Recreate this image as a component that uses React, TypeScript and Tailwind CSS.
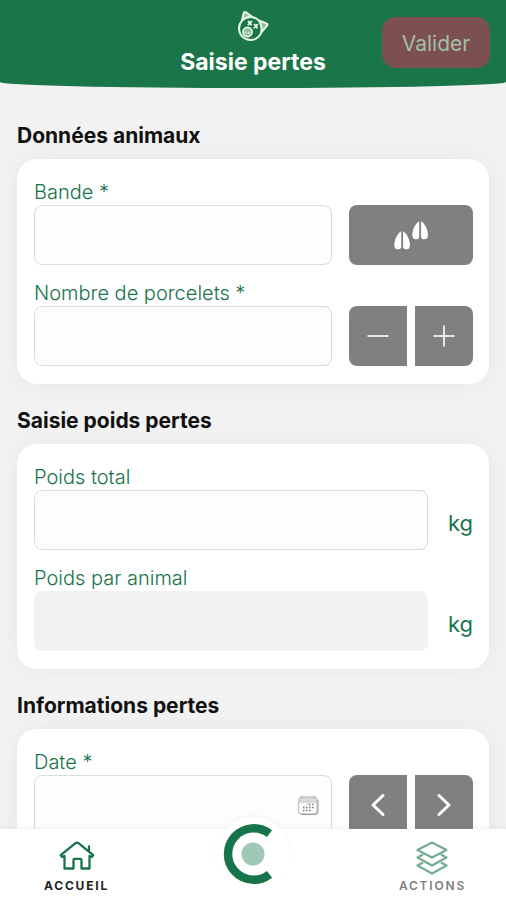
import { useState, type ReactNode } from "react";

const actionClass =
  "flex h-[60px] flex-1 items-center justify-center bg-[#808080] text-white";

function PigIcon() {
  return (
    <svg width="32" height="32" viewBox="0 0 32 32" fill="none" stroke="#eaf6e6" strokeLinecap="round" strokeLinejoin="round" aria-hidden="true">
      <circle cx="13.500" cy="18.500" r="11.500" strokeWidth="2" />
      <path d="M4.800 10.500 6.800 3Q7.400 1.200 9 2.200L14.800 6.600Q9 6.500 4.800 10.500ZM22.200 10.500 29.300 13.300Q31.200 14.200 30 15.700L24.600 22.200Q25.200 15.500 22.200 10.500Z" strokeWidth="1.900" fill="#8fbd9f" />
      <path d="m11.600 11.600 2.400 3M14.400 11.600l-3 3M17.500 14.700l2.400 3M20.300 14.700l-3 3" strokeWidth="1.900" />
      <circle cx="10.500" cy="22" r="4.600" strokeWidth="1.700" fill="#8fbd9f" />
      <path d="M8.900 22v.6M11.900 22.600v.6" strokeWidth="1.500" />
    </svg>
  );
}

function HoofIcon() {
  return (
    <svg width="34" height="29" viewBox="0 0 34 29" fill="white" aria-hidden="true">
      <path d="M7.200 10.300C3.400 12 .3 19.500 .3 24c0 2.800 1.200 4.200 3.300 4.200s3.600-.8 3.600-2.300zM9.100 10.300c3.800 1.700 6.900 9.200 6.900 13.700 0 2.800-1.200 4.200-3.300 4.200s-3.600-.8-3.600-2.300z" />
      <path d="M25.200.3C21.400 2 18.300 9.500 18.300 14c0 2.800 1.200 4.200 3.300 4.200s3.600-.8 3.600-2.300zM27.100.3c3.800 1.700 6.900 9.200 6.900 13.700 0 2.800-1.200 4.200-3.300 4.200s-3.600-.8-3.600-2.300z" />
    </svg>
  );
}

function CalendarIcon() {
  return (
    <svg width="21" height="21" viewBox="0 0 21 21" fill="none" aria-hidden="true">
      <path d="M1 8V4.500Q1 2 3.500 2h13Q19 2 19 4.500V8h-8v2H9V8Z" fill="#d9d9d9" />
      <path d="M1 4.500Q1 2 3.500 2h13Q19 2 19 4.500V16q0 3-3 3H3.500Q.5 19 .5 16.500ZM4 .5V3M16 .5V3" stroke="#b3b3b3" />
      <path d="M3 19.500h14q3 0 3-3V5" stroke="#999" />
      <path d="M11 9.500h6M5 12.500h12M5 15.500h9" stroke="#777" strokeWidth="1.500" strokeDasharray="1.500 1.500" />
    </svg>
  );
}

function HomeIcon() {
  return (
    <svg width="36" height="30" viewBox="0 0 36 30" fill="none" stroke="#17734a" strokeWidth="2.300" strokeLinecap="round" strokeLinejoin="round" aria-hidden="true">
      <path d="M1.800 14.200 16.500 2.200Q18 1 19.500 2.200L34.200 14.200 32.800 16 30.500 15V27.500H22.500V19Q22.500 17.800 21.300 17.800H15.700Q14.500 17.800 14.500 19V27.500H5.500V15L3.200 16ZM30 5.500V10.500" />
    </svg>
  );
}

function LayersIcon() {
  return (
    <svg width="34" height="34" viewBox="0 0 34 34" fill="none" stroke="#74ae94" strokeWidth="2.300" strokeLinejoin="round" aria-hidden="true">
      <path d="M17 1.500 31.500 9 17 16.500 2.500 9Z" />
      <path d="m8 13.500-5.500 3L17 24.500l14.500-8-5.500-3" />
      <path d="m8 21.500-5.500 3L17 32.500l14.500-8-5.500-3" />
    </svg>
  );
}

function LogoIcon() {
  return (
    <svg width="60" height="60" viewBox="0 0 60 60" fill="none" aria-hidden="true">
      <path d="M46.500 9.700A25.700 25.700 0 1 0 46.500 50.300" stroke="#17734a" strokeWidth="8.500" />
      <circle cx="30" cy="30" r="11.500" fill="#a0c8b7" />
    </svg>
  );
}

function Section({ title, children }: { title: string; children: ReactNode }) {
  return (
    <section>
      <h2 className="mb-2 text-[21px] leading-[30px] font-bold text-[#111]">{title}</h2>
      <div className="flex flex-col gap-[17px] rounded-[20px] bg-white pt-[22px] pr-4 pb-[18px] pl-[17px] shadow-[0_0_24px_rgba(0,0,0,0.05)]">
        {children}
      </div>
    </section>
  );
}

function Label({ htmlFor, children }: { htmlFor: string; children: ReactNode }) {
  return (
    <label htmlFor={htmlFor} className="block h-6 text-xl leading-[22px] font-light text-[#17734a]">
      {children}
    </label>
  );
}

const inputClass =
  "block h-[60px] w-full rounded-lg border border-[#dcdcdc] bg-[#fdfdfd] px-4 text-xl disabled:border-[#f2f2f2] disabled:bg-[#f2f2f2]";

function Field({ id, label, disabled, children }: { id: string; label: string; disabled?: boolean; children: ReactNode }) {
  return (
    <div className="flex items-end">
      <div className="min-w-0 flex-1">
        <Label htmlFor={id}>{label}</Label>
        <input id={id} type="text" disabled={disabled} className={inputClass} />
      </div>
      {children}
    </div>
  );
}

function Unit() {
  return <span className="ml-5 pb-3 text-[22px] leading-[30px] text-[#17734a]">kg</span>;
}

export default function App() {
  const [count, setCount] = useState("");
  const step = (delta: number) => setCount(String(Math.max(0, Number(count) + delta)));

  return (
    <div className="flex h-screen flex-col overflow-hidden bg-[#f2f2f2] font-['Inter',sans-serif]">
      <header className="grid h-[88px] shrink-0 grid-cols-[1fr_auto_1fr] rounded-b-[50%_6px] bg-[#1a7548] px-4">
        <div className="col-start-2 flex flex-col items-center pt-[10px]">
          <PigIcon />
          <h1 className="mt-1 text-[23px] leading-8 font-bold text-white">Saisie pertes</h1>
        </div>
        <button type="button" className="mt-[17px] h-[51px] w-[108px] justify-self-end rounded-[14px] bg-[#7c4f50] pt-[2px] text-[21px] text-[#a3bfa6]">
          Valider
        </button>
      </header>

      <main className="flex min-h-0 flex-1 flex-col gap-[22px] overflow-hidden px-[17px] pt-[33px]">
        <Section title="Données animaux">
          <Field id="bande" label="Bande *">
            <div className="ml-[17px] flex w-[124px]">
              <button type="button" aria-label="Choisir une bande" className={`${actionClass} rounded-lg`}>
                <HoofIcon />
              </button>
            </div>
          </Field>
          <div className="flex items-end">
            <div className="min-w-0 flex-1">
              <Label htmlFor="porcelets">Nombre de porcelets *</Label>
              <input id="porcelets" type="text" inputMode="numeric" value={count} onChange={(e) => setCount(e.target.value)} className={inputClass} />
            </div>
            <div className="ml-[17px] flex w-[124px] gap-2">
              <button type="button" aria-label="Diminuer" onClick={() => step(-1)} className={`${actionClass} rounded-l-lg`}>
                <svg width="22" height="22" viewBox="0 0 22 22" stroke="#e6e6e6" strokeWidth="2" aria-hidden="true"><path d="M0.500 11h21" /></svg>
              </button>
              <button type="button" aria-label="Augmenter" onClick={() => step(1)} className={`${actionClass} rounded-r-lg`}>
                <svg width="22" height="22" viewBox="0 0 22 22" stroke="#e6e6e6" strokeWidth="2" aria-hidden="true"><path d="M0.500 11h21M11 .5v21" /></svg>
              </button>
            </div>
          </div>
        </Section>

        <Section title="Saisie poids pertes">
          <Field id="poids-total" label="Poids total"><Unit /></Field>
          <Field id="poids-animal" label="Poids par animal" disabled><Unit /></Field>
        </Section>

        <Section title="Informations pertes">
          <div className="flex items-end">
            <div className="min-w-0 flex-1">
              <Label htmlFor="date">Date *</Label>
              <div className="flex h-[60px] items-center rounded-lg border border-[#dcdcdc] bg-[#fdfdfd] pr-3">
                <input id="date" type="text" className="h-full min-w-0 flex-1 px-4 text-xl" />
                <button type="button" aria-label="Ouvrir le calendrier"><CalendarIcon /></button>
              </div>
            </div>
            <div className="ml-[17px] flex w-[124px] gap-2">
              <button type="button" aria-label="Jour précédent" className={`${actionClass} rounded-l-lg`}>
                <svg width="14" height="22" viewBox="0 0 14 22" fill="none" stroke="white" strokeWidth="3" strokeLinecap="round" strokeLinejoin="round" aria-hidden="true"><path d="M12 1.500 2 11l10 9.500" /></svg>
              </button>
              <button type="button" aria-label="Jour suivant" className={`${actionClass} rounded-r-lg`}>
                <svg width="14" height="22" viewBox="0 0 14 22" fill="none" stroke="white" strokeWidth="3" strokeLinecap="round" strokeLinejoin="round" aria-hidden="true"><path d="m2 1.500 10 9.500-10 9.500" /></svg>
              </button>
            </div>
          </div>
        </Section>
      </main>

      <nav className="relative flex h-[71px] shrink-0 justify-between bg-white pr-10 pl-11 shadow-[0_0_6px_rgba(0,0,0,0.08)]">
        <a href="#accueil" className="relative flex flex-col items-center pt-3 text-xs leading-4 font-bold tracking-[0.15em] text-[#222]">
          <span className="flex h-[37px] items-start"><HomeIcon /></span>
          ACCUEIL
        </a>
        <button type="button" aria-label="Menu principal" className="absolute -top-3 left-1/2 flex size-[74px] -translate-x-1/2 items-center justify-center rounded-full bg-white shadow-[0_-2px_4px_rgba(0,0,0,0.03)]">
          <LogoIcon />
        </button>
        <a href="#actions" className="relative flex flex-col items-center pt-3 text-xs leading-4 font-semibold tracking-[0.15em] text-[#808080]">
          <span className="flex h-[37px] items-start"><LayersIcon /></span>
          ACTIONS
        </a>
      </nav>
    </div>
  );
}
